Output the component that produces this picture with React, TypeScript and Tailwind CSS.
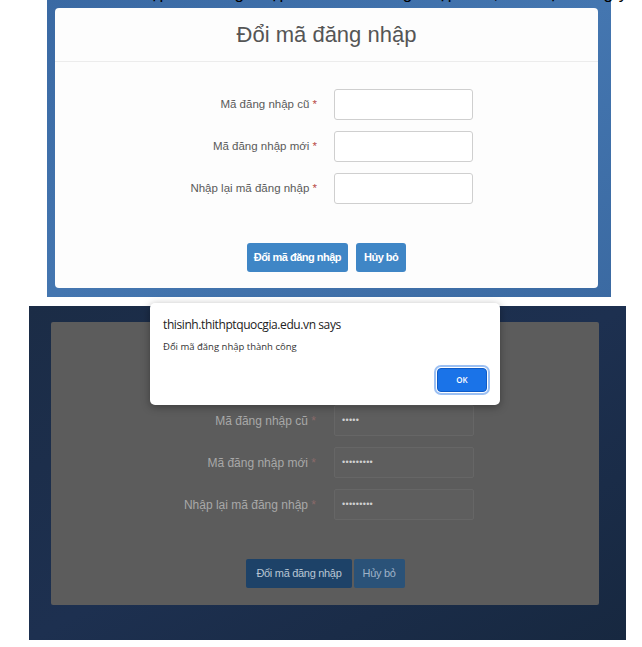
import React from 'react';

const fields = [
  { label: 'Mã đăng nhập cũ', value: '•••••' },
  { label: 'Mã đăng nhập mới', value: '•••••••••' },
  { label: 'Nhập lại mã đăng nhập', value: '•••••••••' },
];

export default function App() {
  return (
    <div
      className="relative w-[642px] h-[647px] bg-white overflow-hidden"
      style={{ fontFamily: '"Liberation Sans", Arial, sans-serif' }}
    >
      {/* cropped line of text from the page above */}
      <div className="absolute left-0 top-0 w-full h-[4px] overflow-hidden z-10">
        <div className="-mt-[15px] pl-[60px] text-[17px] leading-[18px] text-black whitespace-nowrap tracking-[0.5px]">
          Thí sinh nhập mã đăng nhập cũ và mã đăng nhập mới, rồi chọn đồng ý
        </div>
      </div>

      {/* Top: the change password modal */}
      <div className="ml-[47px] w-[564px] h-[297px] bg-gradient-to-br from-[#3a69a3] via-[#4476b0] to-[#3b6aa2] pt-[8px] pl-[8px]">
        <div className="w-[543px] h-[280px] bg-[#fdfdfd] rounded-[4px] flex flex-col">
          <div className="h-[54px] border-b border-[#ececec] flex items-center justify-center">
            <h3 className="text-[22px] text-[#555] font-normal">Đổi mã đăng nhập</h3>
          </div>
          <div className="pt-[27px] flex flex-col gap-[11px]">
            {fields.map((f) => (
              <div key={f.label} className="flex items-center">
                <label className="w-[279px] text-right text-[11.5px] text-[#5a5a5a] pr-[17px]">
                  {f.label} <span className="text-[#b94a48]">*</span>
                </label>
                <div className="w-[139px] h-[31px] border border-[#cfcfcf] rounded-[3px] bg-white" />
              </div>
            ))}
          </div>
          <div className="mt-auto pb-[16px] flex justify-center gap-[8px]">
            <button className="h-[29px] px-[7px] rounded-[3px] bg-[#3f86c6] text-white text-[11px] font-bold tracking-[-0.5px]">
              Đổi mã đăng nhập
            </button>
            <button className="h-[29px] px-[8px] rounded-[3px] bg-[#3f86c6] text-white text-[11px] font-bold tracking-[-0.5px]">
              Hủy bỏ
            </button>
          </div>
        </div>
      </div>

      {/* Bottom: after submit, dimmed page with browser alert */}
      <div className="mt-[9px] ml-[29px] w-[597px] h-[334px] bg-gradient-to-br from-[#1b2c46] via-[#1d3050] to-[#172840] pt-[16px] pl-[22px]">
        <div className="w-[548px] h-[283px] bg-[#5c5c5c] rounded-[2px] flex flex-col">
          <div className="h-[58px]" />
          <div className="pt-[25px] flex flex-col gap-[11px]">
            {fields.map((f) => (
              <div key={f.label} className="flex items-center">
                <label className="w-[283px] text-right text-[12px] text-[#a8a8a8] pr-[18px]">
                  {f.label} <span className="text-[#8a6a6a]">*</span>
                </label>
                <div className="w-[140px] h-[31px] border border-[#666] rounded-[2px] bg-[#5e5e5e] flex items-center pl-[7px] text-[9px] text-[#d0d0d0] tracking-[0.3px]">
                  {f.value}
                </div>
              </div>
            ))}
          </div>
          <div className="mt-auto pb-[17px] flex justify-center gap-[2px] pl-[1px]">
            <button className="h-[29px] px-[10px] rounded-[2px] bg-[#1d4268] text-[#b9c6d4] text-[11px] tracking-[-0.3px]">
              Đổi mã đăng nhập
            </button>
            <button className="h-[29px] px-[9px] rounded-[2px] bg-[#2a5278] text-[#9fb3c8] text-[11px] tracking-[-0.3px]">
              Hủy bỏ
            </button>
          </div>
        </div>
      </div>

      {/* browser alert */}
      <div
        className="absolute left-[150px] top-[303px] w-[350px] h-[102px] bg-white rounded-[5px] shadow-[0_2px_8px_rgba(0,0,0,0.35)] px-[13px] pt-[15px]"
        style={{ fontFamily: '"Open Sans", "Noto Sans", sans-serif' }}
      >
        <div className="text-[12px] leading-[14px] text-[#222] tracking-[-0.4px]">thisinh.thithptquocgia.edu.vn says</div>
        <div className="mt-[9px] text-[9.5px] leading-[12px] text-[#333]">Đổi mã đăng nhập thành công</div>
        <div className="flex justify-end mt-[15px]">
          <button className="w-[50px] h-[24px] rounded-[4px] bg-[#1a73e8] text-white text-[8px] font-semibold ring-2 ring-[#9cc0f3] ring-offset-[1px] border border-[#0f5bc7]">
            OK
          </button>
        </div>
      </div>
    </div>
  );
}
